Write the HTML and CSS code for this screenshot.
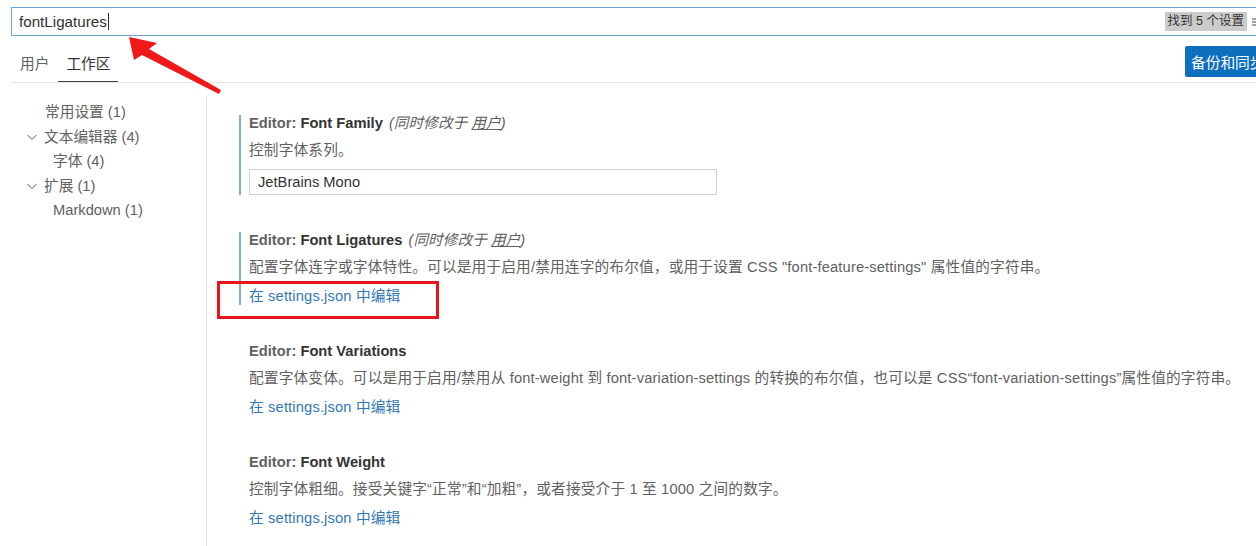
FILE: index.html
```html
<!DOCTYPE html>
<html lang="zh-CN">
<head>
  <meta charset="UTF-8" />
  <title>设置</title>
  <link rel="stylesheet" href="styles.css">
</head>
<body>
  <!-- Search -->
  <div class="search">
    <span class="query">fontLigatures</span><span class="caret"></span>
    <span class="count">找到 5 个设置</span>
    <svg class="filter" width="10" height="12" viewBox="0 0 10 12"><path d="M0 3h10M0 6h10M0 9h10" stroke="#444" stroke-width="1.2"/></svg>
  </div>

  <!-- Tabs -->
  <div class="tabs">
    <span class="tab">用户</span>
    <span class="tab active">工作区</span>
    <button class="sync">备份和同步设置</button>
  </div>

  <div class="body">
    <nav class="toc">
      <div class="row lvl1">常用设置 (1)</div>
      <div class="row"><svg class="chev" width="12" height="12" viewBox="0 0 12 12"><path d="M1.5 4l4.5 4.5L10.5 4" fill="none" stroke="#555" stroke-width="1"/></svg>文本编辑器 (4)</div>
      <div class="row lvl2">字体 (4)</div>
      <div class="row"><svg class="chev" width="12" height="12" viewBox="0 0 12 12"><path d="M1.5 4l4.5 4.5L10.5 4" fill="none" stroke="#555" stroke-width="1"/></svg>扩展 (1)</div>
      <div class="row lvl2">Markdown (1)</div>
    </nav>

    <main class="list">
      <div class="item modified">
        <div class="title"><span class="cat">Editor: </span><b>Font Family</b> <span class="note">(同时修改于 <u>用户</u>)</span></div>
        <div class="desc">控制字体系列。</div>
        <div class="input">JetBrains Mono</div>
      </div>

      <div class="item modified">
        <div class="title"><span class="cat">Editor: </span><b>Font Ligatures</b> <span class="note">(同时修改于 <u>用户</u>)</span></div>
        <div class="desc">配置字体连字或字体特性。可以是用于启用/禁用连字的布尔值，或用于设置 CSS "font-feature-settings" 属性值的字符串。</div>
        <a class="link">在 settings.json 中编辑</a>
      </div>

      <div class="item">
        <div class="title"><span class="cat">Editor: </span><b>Font Variations</b></div>
        <div class="desc">配置字体变体。可以是用于启用/禁用从 font-weight 到 font-variation-settings 的转换的布尔值，也可以是 CSS“font-variation-settings”属性值的字符串。</div>
        <a class="link">在 settings.json 中编辑</a>
      </div>

      <div class="item">
        <div class="title"><span class="cat">Editor: </span><b>Font Weight</b></div>
        <div class="desc">控制字体粗细。接受关键字“正常”和“加粗”，或者接受介于 1 至 1000 之间的数字。</div>
        <a class="link">在 settings.json 中编辑</a>
      </div>
    </main>
  </div>

  <!-- annotations -->
  <svg class="arrow" width="1256" height="546" viewBox="0 0 1256 546">
    <polygon points="129,37 157,43 149,49 221,90 219,94 142,55 134,60" fill="#f01818"/>
  </svg>
  <div class="mark"></div>
</body>
</html>
```

FILE: styles.css
```css
body {
  margin: 0;
  width: 1256px;
  height: 546px;
  overflow: hidden;
  position: relative;
  background: #fff;
  font-family: "Liberation Sans", "Noto Sans CJK SC", sans-serif;
  font-size: 14.7px;
  color: #616161;
}

.search {
  margin: 7px 0 0 11px;
  width: 1260px;
  height: 27px;
  border: 1px solid #6aa6d6;
  display: flex;
  align-items: center;
  padding-left: 7px;
  box-sizing: content-box;
  color: #333;
  font-size: 15.2px;
}

.caret {
  width: 1px;
  height: 17px;
  background: #333;
  margin-left: 1px;
}

.count {
  margin-left: auto;
  margin-right: 2px;
  background: #cbcbcb;
  color: #333;
  font-size: 12.5px;
  padding: 2px 3px;
  line-height: 15px;
  position: relative;
  left: -20px;
}

.filter {
  position: relative;
  left: -17px;
}

.tabs {
  margin: 11px 0 0 11px;
  height: 35px;
  border-bottom: 1px solid #e4e4e4;
  display: flex;
  align-items: flex-start;
}

.tab {
  padding: 0 9px;
  line-height: 35px;
  height: 35px;
  box-sizing: border-box;
}

.tab.active {
  color: #333;
  border-bottom: 1px solid #444;
  padding: 0 8px;
}

.sync {
  margin-left: auto;
  margin-top: -1px;
  margin-right: -60px;
  height: 31px;
  width: 131px;
  padding: 0 0 0 6px;
  text-align: left;
  border: none;
  border-radius: 2px;
  background: #0e6fbf;
  color: #fff;
  font: inherit;
  font-size: 14.7px;
}

.body {
  display: flex;
  height: 462px;
  margin-top: 14px;
}

.toc {
  width: 207px;
  border-right: 1px solid #e2e2e2;
  padding-top: 3px;
  box-sizing: border-box;
}

.row {
  height: 24.5px;
  line-height: 24.5px;
  display: flex;
  align-items: center;
  padding-left: 26px;
  white-space: nowrap;
}

.row.lvl1 { padding-left: 45px; }
.row.lvl2 { padding-left: 53px; }

.chev {
  margin-right: 6px;
}

.list {
  padding: 18px 0 0 32px;
  white-space: nowrap;
}

.item {
  padding-left: 8px;
  border-left: 2px solid transparent;
  margin-bottom: 38px;
}

.item.modified {
  border-left-color: #7cb0d2;
}

.item:first-child {
  margin-bottom: 37px;
}

.title {
  line-height: 16px;
  color: #616161;
}

.cat { font-weight: 600; }

.title b {
  color: #333;
}

.note {
  font-style: italic;
  margin-left: 2px;
}

.desc {
  margin-top: 10px;
  line-height: 18px;
  letter-spacing: 0.15px;
}

.input {
  margin-top: 10px;
  width: 468px;
  height: 26px;
  border: 1px solid #cfcfcf;
  box-sizing: border-box;
  padding-left: 8px;
  line-height: 24px;
  color: #333;
}

.link {
  display: block;
  margin-top: 11px;
  line-height: 18px;
  letter-spacing: 0.15px;
  color: #3377b5;
}

.arrow {
  position: absolute;
  top: 0;
  left: 0;
  pointer-events: none;
}

.mark {
  position: absolute;
  left: 217px;
  top: 281px;
  width: 216px;
  height: 32px;
  border: 3px solid #e8141b;
}
```
